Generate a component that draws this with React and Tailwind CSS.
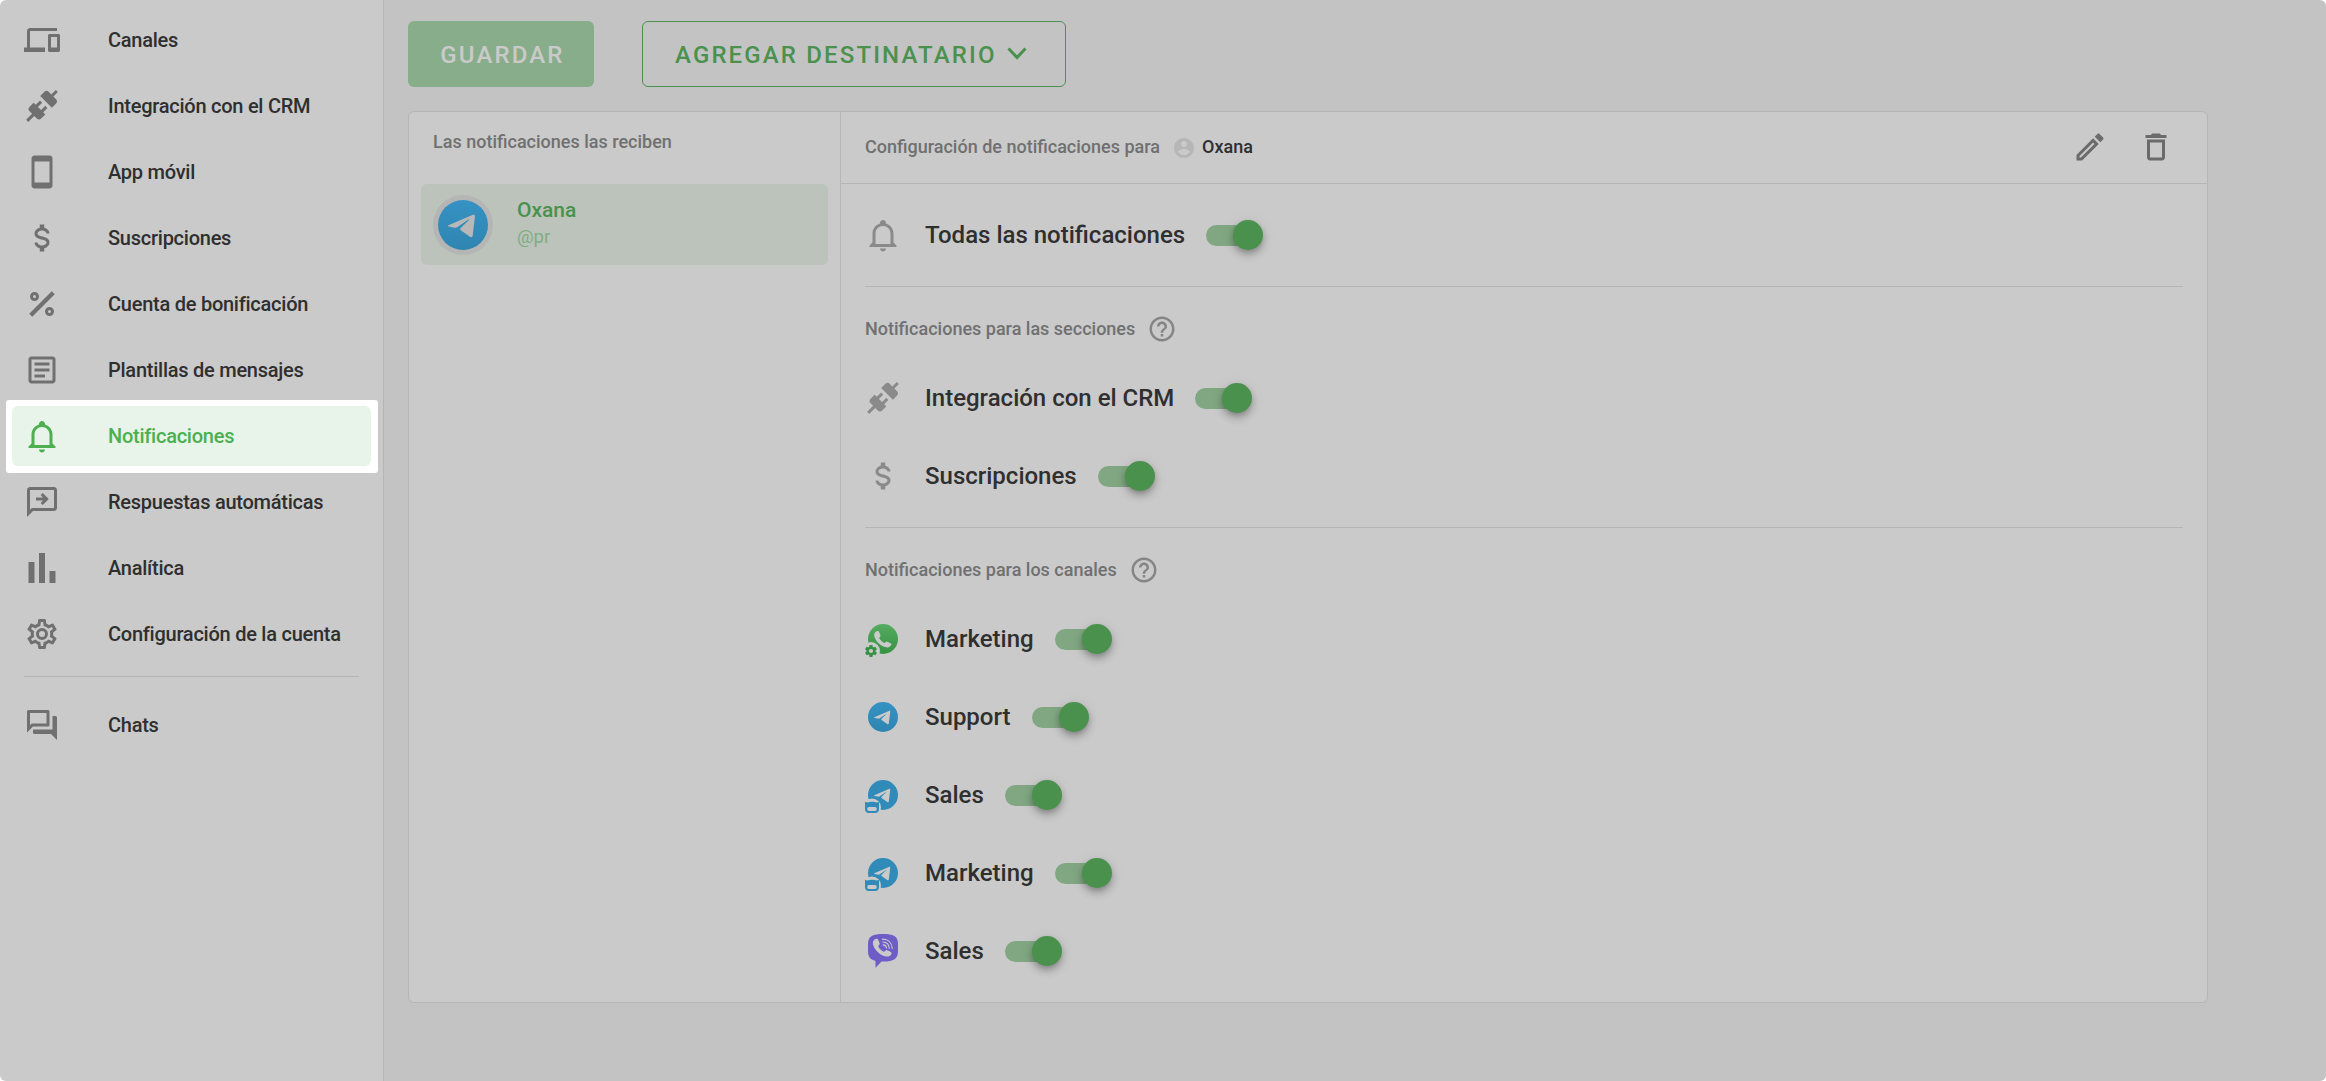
import React from "react";

const P = {
  devices: "M4 6h18V4H4c-1.1 0-2 .9-2 2v11H0v3h14v-3H4V6zm19 2h-6c-.55 0-1 .45-1 1v10c0 .55.45 1 1 1h6c.55 0 1-.45 1-1V9c0-.55-.45-1-1-1zm-1 9h-4v-7h4v7z",
  connection: "M21.4 7.5C22.2 8.3 22.2 9.6 21.4 10.3L18.6 13.1L10.8 5.3L13.6 2.5C14.4 1.7 15.7 1.7 16.4 2.5L18.2 4.3L21.2 1.3L22.6 2.7L19.6 5.7L21.4 7.5M15.6 13.3L14.2 11.9L11.4 14.7L9.3 12.6L12.1 9.8L10.7 8.4L7.9 11.2L6.4 9.8L3.6 12.6C2.8 13.4 2.8 14.7 3.6 15.4L5.4 17.2L1.4 21.2L2.8 22.6L6.8 18.6L8.6 20.4C9.4 21.2 10.7 21.2 11.4 20.4L14.2 17.6L12.8 16.2L15.6 13.3Z",
  phone: "M17 1.01L7 1c-1.1 0-1.99.9-1.99 2v18c0 1.1.89 2 1.99 2h10c1.1 0 2-.9 2-2V3c0-1.1-.9-1.99-2-1.99zM17 19H7V5h10v14z",
  usd: "M7,15H9C9,16.08 10.37,17 12,17C13.63,17 15,16.08 15,15C15,13.9 13.96,13.5 11.76,12.97C9.64,12.44 7,11.78 7,9C7,7.21 8.47,5.69 10.5,5.18V3H13.5V5.18C15.53,5.69 17,7.21 17,9H15C15,7.92 13.63,7 12,7C10.37,7 9,7.92 9,9C9,10.1 10.04,10.5 12.24,11.03C14.36,11.56 17,12.22 17,15C17,16.79 15.53,18.31 13.5,18.82V21H10.5V18.82C8.47,18.31 7,16.79 7,15Z",
  percent: "M18.5 3.5L20.5 5.5L5.5 20.5L3.5 18.5L18.5 3.5M7 4A3 3 0 1 1 7 10A3 3 0 1 1 7 4M17 14A3 3 0 1 1 17 20A3 3 0 1 1 17 14M7 6A1 1 0 1 0 7 8A1 1 0 1 0 7 6M17 16A1 1 0 1 0 17 18A1 1 0 1 0 17 16Z",
  textbox: "M5,3C3.89,3 3,3.89 3,5V19C3,20.11 3.89,21 5,21H19C20.11,21 21,20.11 21,19V5C21,3.89 20.11,3 19,3H5M5,5H19V19H5V5M7,7V9H17V7H7M7,11V13H17V11H7M7,15V17H14V15H7Z",
  bell: "M10 21H14C14 22.1 13.1 23 12 23S10 22.1 10 21M21 19V20H3V19L5 17V11C5 7.9 7 5.2 10 4.3V4C10 2.9 10.9 2 12 2S14 2.9 14 4V4.3C17 5.2 19 7.9 19 11V17L21 19M17 11C17 8.2 14.8 6 12 6S7 8.2 7 11V18H17V11Z",
  reply: "M20 2H4C2.9 2 2 2.9 2 4V22L6 18H20C21.1 18 22 17.1 22 16V4C22 2.9 21.1 2 20 2M20 16H5.2L4 17.2V4H20V16M12.5 14L16.5 10L12.5 6L11.1 7.4L12.67 9H8V11H12.67L11.1 12.6L12.5 14Z",
  poll: "M3,22V8H7V22H3M10,22V2H14V22H10M17,22V14H21V22H17Z",
  cog: "M12,8A4,4 0 0,1 16,12A4,4 0 0,1 12,16A4,4 0 0,1 8,12A4,4 0 0,1 12,8M12,10A2,2 0 0,0 10,12A2,2 0 0,0 12,14A2,2 0 0,0 14,12A2,2 0 0,0 12,10M10,22C9.75,22 9.54,21.82 9.5,21.58L9.13,18.93C8.5,18.68 7.96,18.34 7.44,17.94L4.95,18.95C4.73,19.03 4.46,18.95 4.34,18.73L2.34,15.27C2.21,15.05 2.27,14.78 2.46,14.63L4.57,12.97L4.5,12L4.57,11L2.46,9.37C2.27,9.22 2.21,8.95 2.34,8.73L4.34,5.27C4.46,5.05 4.73,4.96 4.95,5.05L7.44,6.05C7.96,5.66 8.5,5.32 9.13,5.07L9.5,2.42C9.54,2.18 9.75,2 10,2H14C14.25,2 14.46,2.18 14.5,2.42L14.87,5.07C15.5,5.32 16.04,5.66 16.56,6.05L19.05,5.05C19.27,4.96 19.54,5.05 19.66,5.27L21.66,8.73C21.79,8.95 21.73,9.22 21.54,9.37L19.43,11L19.5,12L19.43,13L21.54,14.63C21.73,14.78 21.79,15.05 21.66,15.27L19.66,18.73C19.54,18.95 19.27,19.04 19.05,18.95L16.56,17.95C16.04,18.34 15.5,18.68 14.87,18.93L14.5,21.58C14.46,21.82 14.25,22 14,22H10M11.25,4L10.88,6.61C9.68,6.86 8.62,7.5 7.85,8.39L5.44,7.35L4.69,8.65L6.8,10.2C6.4,11.37 6.4,12.64 6.8,13.8L4.68,15.36L5.43,16.66L7.86,15.62C8.63,16.5 9.68,17.14 10.87,17.38L11.24,20H12.76L13.13,17.39C14.32,17.14 15.37,16.5 16.14,15.62L18.57,16.66L19.32,15.36L17.2,13.81C17.6,12.64 17.6,11.37 17.2,10.2L19.31,8.65L18.56,7.35L16.15,8.39C15.38,7.5 14.32,6.86 13.12,6.62L12.75,4H11.25Z",
  forum: "M15,4V11H5.17L4,12.17V4H15M16,2H3A1,1 0 0,0 2,3V17L6,13H16A1,1 0 0,0 17,12V3A1,1 0 0,0 16,2M21,6H19V15H6V17A1,1 0 0,0 7,18H18L22,22V7A1,1 0 0,0 21,6Z",
  pencil: "M14.06,9L15,9.94L5.92,19H5V18.08L14.06,9M17.66,3C17.41,3 17.15,3.1 16.96,3.29L15.13,5.12L18.88,8.87L20.71,7.04C21.1,6.65 21.1,6 20.71,5.63L18.37,3.29C18.17,3.09 17.92,3 17.66,3M14.06,6.19L3,17.25V21H6.75L17.81,9.94L14.06,6.19Z",
  trash: "M6 19c0 1.1.9 2 2 2h8c1.1 0 2-.9 2-2V7H6v12zM8 9h8v10H8V9zm7.5-5l-1-1h-5l-1 1H5v2h14V4z",
  help: "M11 18h2v-2h-2v2zm1-16C6.48 2 2 6.48 2 12s4.48 10 10 10 10-4.48 10-10S17.52 2 12 2zm0 18c-4.41 0-8-3.59-8-8s3.59-8 8-8 8 3.59 8 8-3.59 8-8 8zm0-14c-2.21 0-4 1.79-4 4h2c0-1.1.9-2 2-2s2 .9 2 2c0 2-3 1.75-3 5h2c0-2.25 3-2.5 3-5 0-2.21-1.79-4-4-4z",
  account: "M12 2C6.48 2 2 6.48 2 12s4.48 10 10 10 10-4.48 10-10S17.52 2 12 2zm0 3c1.66 0 3 1.34 3 3s-1.34 3-3 3-3-1.34-3-3 1.34-3 3-3zm0 14.2c-2.5 0-4.71-1.28-6-3.22.03-1.99 4-3.08 6-3.08 1.99 0 5.97 1.09 6 3.08-1.29 1.94-3.5 3.22-6 3.22z",
  gear: "M12 15.5A3.5 3.5 0 0 1 8.5 12 3.5 3.5 0 0 1 12 8.5A3.5 3.5 0 0 1 15.5 12 3.5 3.5 0 0 1 12 15.5M19.43 12.97C19.47 12.65 19.5 12.33 19.5 12S19.47 11.34 19.43 11L21.54 9.37C21.73 9.22 21.78 8.95 21.66 8.73L19.66 5.27C19.54 5.05 19.27 4.96 19.05 5.05L16.56 6.05C16.04 5.66 15.5 5.32 14.87 5.07L14.5 2.42C14.46 2.18 14.25 2 14 2H10C9.75 2 9.54 2.18 9.5 2.42L9.13 5.07C8.5 5.32 7.96 5.66 7.44 6.05L4.95 5.05C4.73 4.96 4.46 5.05 4.34 5.27L2.34 8.73C2.21 8.95 2.27 9.22 2.46 9.37L4.57 11C4.53 11.34 4.5 11.67 4.5 12S4.53 12.65 4.57 12.97L2.46 14.63C2.27 14.78 2.21 15.05 2.34 15.27L4.34 18.73C4.46 18.95 4.73 19.03 4.95 18.95L7.44 17.94C7.96 18.34 8.5 18.68 9.13 18.93L9.5 21.58C9.54 21.82 9.75 22 10 22H14C14.25 22 14.46 21.82 14.5 21.58L14.87 18.93C15.5 18.67 16.04 18.34 16.56 17.94L19.05 18.95C19.27 19.03 19.54 18.95 19.66 18.73L21.66 15.27C21.78 15.05 21.73 14.78 21.54 14.63L19.43 12.97Z",
};

const HANDSET =
  "M6.2 10.5C6.4 8.2 8.8 6.6 10.4 7.1C11 7.6 12.2 10.6 12.5 11.4C12.7 12.4 11.1 13.4 11.2 14.1C12.2 16.2 14 18 16.2 19C17 19.1 18 17.3 18.8 17.4C19.8 17.7 22.4 19 23.2 19.6C24 20.8 22.2 23.2 19.9 23.4C13.6 23.8 5.9 16.2 6.2 10.5Z";

function Icon({ name, className }) {
  return (
    <svg viewBox="0 0 24 24" fill="currentColor" className={className}>
      <path d={P[name]} />
    </svg>
  );
}

function TelegramDisc({ fill = "url(#tg)", plane = "#cacaca" }) {
  return (
    <>
      <circle cx="15" cy="15" r="15" fill={fill} />
      <path
        d="M6.3 15.2L20.9 8.9C21.7 8.6 22.3 9 22.2 9.8L20.8 21.5C20.7 22.3 19.9 22.6 19.2 22.1L13.6 18.1C13.2 17.7 13.2 17.2 13.6 16.8L18.4 12.1C18.7 11.7 18.4 11.6 18 11.9L11.7 16.2C11 16.7 10.5 16.8 9.8 16.6L6.4 15.9C5.9 15.7 5.9 15.4 6.3 15.2Z"
        fill={plane}
      />
    </>
  );
}

function Channel({ type }) {
  return (
    <svg viewBox="-3 -3 36 36" className="size-9 overflow-visible">
      {type === "whatsapp" && (
        <>
          <circle cx="15" cy="15" r="15" fill="url(#wa)" />
          <path d={HANDSET} fill="#cacaca" />
          <circle cx="3" cy="27" r="9" fill="#cacaca" />
          <g transform="translate(-4.2 19.8) scale(0.6)" fill="#369243" fillRule="evenodd">
            <path d={P.gear} />
          </g>
        </>
      )}
      {type === "telegram" && <TelegramDisc />}
      {type === "bot" && (
        <>
          <TelegramDisc fill="#318bb9" />
          <circle cx="4" cy="27.4" r="9" fill="#cacaca" />
          <path
            d="M-3 21.8L-1 22.6Q4 21 9 22.6L11 21.8V29Q11 33 7 33H1Q-3 33 -3 29ZM1 27Q-0.8 27 -0.8 29T1 31H7Q8.8 31 8.8 29T7 27Z"
            fill="#318bb9"
            fillRule="evenodd"
          />
        </>
      )}
      {type === "viber" && (
        <>
          <path d="M15 -2C25 -2 30 0 30 8V15C30 23 26 25.5 15 25.5H13.5L7.5 31.8V25C2 23.5 0 20.5 0 15V8C0 0 5 -2 15 -2Z" fill="#6f5dc7" />
          <g transform="translate(-1.9 -4.9) scale(1.09)" fill="#cacaca">
            <path d={HANDSET} />
          </g>
          <path
            d="M14.5 3.2C20 3.2 24 6.5 24.3 12.5M14.8 6C18.5 6.2 21 8.5 21.3 12.2M15.2 8.8C17.2 9 18.3 10.2 18.5 12"
            stroke="#cacaca"
            strokeWidth="1.2"
            strokeLinecap="round"
            fill="none"
          />
        </>
      )}
    </svg>
  );
}

function Toggle() {
  return (
    <span className="relative flex h-[30px] w-[57px] items-center">
      <span className="h-[21px] w-[54px] rounded-full bg-[#80a782]" />
      <span className="absolute top-0 right-0 size-[30px] rounded-full bg-[#4b914e] shadow-[0_3px_6px_-1px_rgba(0,0,0,0.25),0_6px_8px_rgba(0,0,0,0.12),0_2px_15px_rgba(0,0,0,0.08)]" />
    </span>
  );
}

function Row({ icon, channel, label }) {
  return (
    <div className="flex h-[78px] items-center">
      <span className="w-[60px] text-[#8a8a8a]">
        {icon ? <Icon name={icon} className="size-9" /> : <Channel type={channel} />}
      </span>
      <span className="mr-[21px] text-2xl font-medium text-[#2f2f2f]">{label}</span>
      <Toggle />
    </div>
  );
}

function SectionTitle({ children }) {
  return (
    <div className="flex h-[30px] items-center gap-3 text-lg font-medium text-[#707070]">
      <span>{children}</span>
      <Icon name="help" className="size-[30px] text-[#858585]" />
    </div>
  );
}

const NAV = [
  ["devices", "Canales"],
  ["connection", "Integración con el CRM"],
  ["phone", "App móvil"],
  ["usd", "Suscripciones"],
  ["percent", "Cuenta de bonificación"],
  ["textbox", "Plantillas de mensajes"],
  ["bell", "Notificaciones"],
  ["reply", "Respuestas automáticas"],
  ["poll", "Analítica"],
  ["cog", "Configuración de la cuenta"],
];

function NavItem({ icon, label }) {
  const text = <span className="text-xl font-medium tracking-[-0.0125em]">{label}</span>;
  if (icon === "bell") {
    return (
      <div className="-mt-[3px] -mb-1 ml-[6px] h-[73px] w-[372px] rounded-[3px] bg-white pt-[6px] pl-[6px]">
        <div className="flex h-[60px] w-[359px] items-center rounded-md bg-[#e8f4ea] pl-3 text-[#4caf50]">
          <Icon name={icon} className="mr-12 size-9" />
          {text}
        </div>
      </div>
    );
  }
  return (
    <div className="flex h-[66px] items-center pl-6 text-[#2f2f2f]">
      <Icon name={icon} className="mr-12 size-9 text-[#707070]" />
      {text}
    </div>
  );
}

export default function App() {
  return (
    <div className="flex h-[1081px] w-[2326px] overflow-hidden bg-white font-['Roboto',sans-serif]">
      <svg className="absolute size-0">
        <defs>
          <linearGradient id="tg" x1="0" y1="0" x2="0" y2="1">
            <stop offset="0" stopColor="#3592c4" />
            <stop offset="1" stopColor="#2f85b0" />
          </linearGradient>
          <linearGradient id="wa" x1="0" y1="0" x2="0" y2="1">
            <stop offset="0" stopColor="#56ac62" />
            <stop offset="1" stopColor="#369243" />
          </linearGradient>
        </defs>
      </svg>
      <aside className="w-[384px] shrink-0 rounded-l-md border-r border-[#b5b5b5] bg-[#cacaca] pt-[7px]">
        {NAV.map(([icon, label]) => (
          <NavItem key={icon} icon={icon} label={label} />
        ))}
        <div className="mt-[9px] mr-6 mb-[15px] ml-6 h-px bg-[#b5b5b5]" />
        <NavItem icon="forum" label="Chats" />
      </aside>

      <main className="grow rounded-r-md bg-[#c3c3c3] pt-[21px] pl-6">
        <div className="flex gap-12 text-2xl font-medium tracking-[0.0892857143em]">
          <button className="h-[66px] w-[186px] rounded-md bg-[#88ad8a] pt-[2px] pl-[3px] text-[#cacaca]">GUARDAR</button>
          <button className="flex h-[66px] w-[424px] items-center rounded-md border border-[#4b914e] pl-8 text-[#4b914e]">
            <span className="pt-[2px]">AGREGAR DESTINATARIO</span>
            <svg viewBox="0 0 24 24" className="ml-2 size-6" fill="none" stroke="currentColor" strokeWidth="3">
              <path d="M3.5 6.5L12 15.5L20.5 6.5" />
            </svg>
          </button>
        </div>

        <section className="mt-6 flex h-[892px] w-[1800px] rounded-md border border-[#b5b5b5] bg-[#cacaca]">
          <div className="w-[432px] border-r border-[#b5b5b5] px-3 pt-4">
            <h2 className="flex h-[27px] items-center pl-3 text-lg font-medium text-[#707070]">Las notificaciones las reciben</h2>
            <div className="mt-[29px] flex h-[81px] items-center rounded-md bg-[#bbc3bb] pl-3">
              <span className="flex size-[60px] items-center justify-center rounded-full bg-[#b5b5b5]">
                <svg viewBox="0 0 30 30" className="size-[50px]">
                  <TelegramDisc plane="#b8b8b8" />
                </svg>
              </span>
              <span className="ml-6 flex flex-col pb-px text-[#4b914e]">
                <span className="text-[21px] leading-[27px] font-medium">Oxana</span>
                <span className="text-[18.5px] leading-[27px] text-[#7fae82]">@pr</span>
              </span>
            </div>
          </div>

          <div className="grow">
            <header className="flex h-[72px] items-center border-b border-[#b5b5b5] pr-[33px] pb-px pl-6">
              <span className="text-lg font-medium text-[#707070]">Configuración de notificaciones para</span>
              <Icon name="account" className="mt-px ml-3 size-6 text-[#b6b6b6]" />
              <span className="ml-[6px] text-lg font-medium text-[#2f2f2f]">Oxana</span>
              <span className="ml-auto flex gap-[30px] text-[#6b6b6b]">
                <Icon name="pencil" className="size-9" />
                <Icon name="trash" className="size-9" />
              </span>
            </header>
            <div className="px-6">
              <div className="border-b border-[#b5b5b5] pt-3 pb-3">
                <Row icon="bell" label="Todas las notificaciones" />
              </div>
              <div className="border-b border-[#b5b5b5] pt-[27px] pb-3">
                <SectionTitle>Notificaciones para las secciones</SectionTitle>
                <div className="pt-[15px]">
                  <Row icon="connection" label="Integración con el CRM" />
                  <Row icon="usd" label="Suscripciones" />
                </div>
              </div>
              <div className="pt-[27px]">
                <SectionTitle>Notificaciones para los canales</SectionTitle>
                <div className="pt-[15px]">
                  <Row channel="whatsapp" label="Marketing" />
                  <Row channel="telegram" label="Support" />
                  <Row channel="bot" label="Sales" />
                  <Row channel="bot" label="Marketing" />
                  <Row channel="viber" label="Sales" />
                </div>
              </div>
            </div>
          </div>
        </section>
      </main>
    </div>
  );
}
